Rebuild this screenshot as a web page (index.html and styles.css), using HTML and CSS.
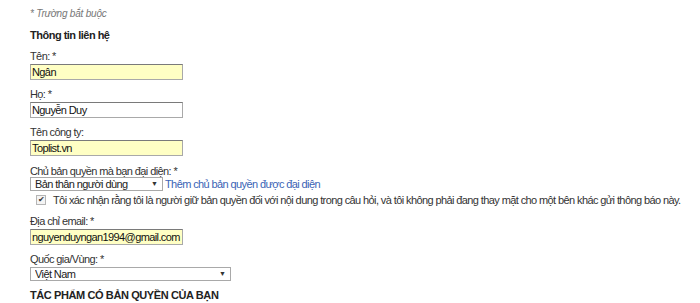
FILE: index.html
```html
<!DOCTYPE html>
<html lang="vi">
<head>
  <meta charset="UTF-8" />
  <meta name="viewport" content="width=device-width, initial-scale=1.0" />
  <title>Thông tin liên hệ</title>
  <link rel="stylesheet" href="styles.css">
</head>
<body>
  <main class="form">
    <p class="note">* Trường bắt buộc</p>
    <h2 class="section">Thông tin liên hệ</h2>

    <div class="field">
      <label for="ten">Tên: *</label>
      <input type="text" id="ten" class="filled" value="Ngân">
    </div>

    <div class="field">
      <label for="ho">Họ: *</label>
      <input type="text" id="ho" value="Nguyễn Duy">
    </div>

    <div class="field">
      <label for="congty">Tên công ty:</label>
      <input type="text" id="congty" class="filled" value="Toplist.vn">
    </div>

    <div class="field field-owner">
      <label for="chu">Chủ bản quyền mà bạn đại diện: *</label>
      <div class="select-row">
        <div class="select owner">
          <select id="chu">
            <option>Bản thân người dùng</option>
          </select>
          <span class="arrow">▼</span>
        </div>
        <a href="#" class="add-link">Thêm chủ bản quyền được đại diện</a>
      </div>
      <div class="confirm">
        <span class="check">✔</span>
        <span>Tôi xác nhận rằng tôi là người giữ bản quyền đối với nội dung trong câu hỏi, và tôi không phải đang thay mặt cho một bên khác gửi thông báo này.</span>
      </div>
    </div>

    <div class="field">
      <label for="email">Địa chỉ email: *</label>
      <input type="text" id="email" class="filled" value="nguyenduyngan1994@gmail.com">
    </div>

    <div class="field">
      <label for="quocgia">Quốc gia/Vùng: *</label>
      <div class="select country">
        <select id="quocgia">
          <option>Việt Nam</option>
        </select>
        <span class="arrow">▼</span>
      </div>
    </div>

    <h2 class="section caps">TÁC PHẨM CÓ BẢN QUYỀN CỦA BẠN</h2>
  </main>
</body>
</html>
```

FILE: styles.css
```css
body {
  margin: 0;
  background-color: #ffffff;
  color: #222222;
  font-family: "Liberation Sans", Arial, sans-serif;
  font-size: 11px;
  letter-spacing: -0.6px;
}

.form {
  padding: 7px 0 0 30px;
}

.note {
  margin: 0;
  font-size: 10px;
  line-height: 14px;
  font-style: italic;
  letter-spacing: -0.2px;
  color: #777777;
}

.section {
  margin: 7px 0 0;
  font-size: 11px;
  line-height: 14px;
  font-weight: bold;
  letter-spacing: -0.5px;
  color: #222222;
}

.field {
  margin-top: 7px;
}

.field label {
  display: block;
  line-height: 14px;
  margin-bottom: 1px;
  color: #333333;
}

.field input[type="text"] {
  display: block;
  box-sizing: border-box;
  width: 153px;
  height: 16px;
  margin: 0;
  padding: 0 1px;
  border: 1px solid #a9a9a9;
  border-top-color: #7a7a7a;
  font-family: inherit;
  font-size: 11px;
  letter-spacing: -0.6px;
  color: #111111;
  background-color: #ffffff;
  outline: none;
}

.field input.filled {
  background-color: #ffffc4;
}

.field-owner {
  margin-top: 8px;
}

.select-row {
  display: flex;
  align-items: center;
  gap: 2px;
  margin-top: -2px;
}

.select {
  position: relative;
  box-sizing: border-box;
  height: 14px;
}

.select select {
  appearance: none;
  display: block;
  box-sizing: border-box;
  width: 100%;
  height: 14px;
  margin: 0;
  padding: 0 4px;
  border: 1px solid #a9a9a9;
  border-radius: 0;
  background-color: #ffffff;
  font-family: inherit;
  font-size: 11px;
  letter-spacing: -0.6px;
  line-height: 12px;
  color: #222222;
}

.select .arrow {
  position: absolute;
  right: 5px;
  top: 2px;
  font-size: 7px;
  line-height: 10px;
  letter-spacing: 0;
  color: #333333;
  pointer-events: none;
}

.owner {
  width: 133px;
}

.country {
  width: 201px;
}

.add-link {
  color: #3a63b5;
  text-decoration: none;
  line-height: 14px;
}

.confirm {
  display: flex;
  align-items: center;
  gap: 7px;
  margin: 2px 0 0 6px;
  line-height: 14px;
  white-space: nowrap;
  color: #333333;
}

.check {
  box-sizing: border-box;
  width: 10px;
  height: 10px;
  border: 1px solid #b5b5b5;
  background-color: #f4f4f4;
  font-size: 8px;
  line-height: 8px;
  letter-spacing: 0;
  text-align: center;
  color: #333333;
}

.caps {
  margin-top: 7px;
  letter-spacing: -0.4px;
}
```
